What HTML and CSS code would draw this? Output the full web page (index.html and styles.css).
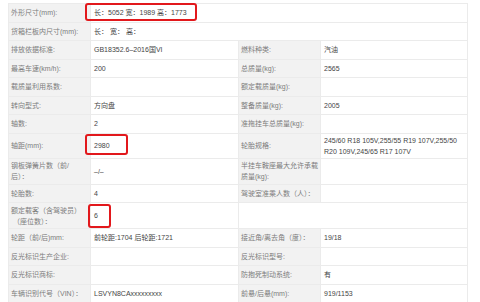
FILE: index.html
```html
<!DOCTYPE html>
<html lang="zh-CN">
<head>
<meta charset="utf-8">
<title>车辆参数</title>
<link rel="stylesheet" href="styles.css">
</head>
<body>
<table class="spec">
  <colgroup>
    <col class="c-label"><col class="c-value"><col class="c-label2"><col class="c-value2">
  </colgroup>
  <tbody>
    <tr>
      <td class="lb">外形尺寸(mm):</td>
      <td class="val" colspan="3"><span class="hl hl-size">长：5052 宽：1989 高：1773</span></td>
    </tr>
    <tr>
      <td class="lb">货箱栏板内尺寸(mm):</td>
      <td class="val" colspan="3">长： 宽： 高：</td>
    </tr>
    <tr>
      <td class="lb">排放依据标准:</td>
      <td class="val">GB18352.6–2016国VI</td>
      <td class="lb">燃料种类:</td>
      <td class="val">汽油</td>
    </tr>
    <tr>
      <td class="lb">最高车速(km/h):</td>
      <td class="val">200</td>
      <td class="lb">总质量(kg):</td>
      <td class="val">2565</td>
    </tr>
    <tr>
      <td class="lb">载质量利用系数:</td>
      <td class="val"></td>
      <td class="lb">额定载质量(kg):</td>
      <td class="val"></td>
    </tr>
    <tr>
      <td class="lb">转向型式:</td>
      <td class="val">方向盘</td>
      <td class="lb">整备质量(kg):</td>
      <td class="val">2005</td>
    </tr>
    <tr>
      <td class="lb">轴数:</td>
      <td class="val">2</td>
      <td class="lb">准拖挂车总质量(kg):</td>
      <td class="val"></td>
    </tr>
    <tr>
      <td class="lb">轴距(mm):</td>
      <td class="val"><span class="hl hl-base">2980</span></td>
      <td class="lb">轮胎规格:</td>
      <td class="val">245/60 R18 105V,255/55 R19 107V,255/50<br>R20 109V,245/65 R17 107V</td>
    </tr>
    <tr class="tall">
      <td class="lb">钢板弹簧片数（前/<br>后）：</td>
      <td class="val">–/–</td>
      <td class="lb">半挂车鞍座最大允许承载<br>质量(kg):</td>
      <td class="val"></td>
    </tr>
    <tr>
      <td class="lb">轮胎数:</td>
      <td class="val">4</td>
      <td class="lb">驾驶室准乘人数（人）：</td>
      <td class="val"></td>
    </tr>
    <tr class="tall">
      <td class="lb">额定载客（含驾驶员）<br>&nbsp;（座位数）：</td>
      <td class="val"><span class="hl hl-seat">6</span></td>
      <td class="val" colspan="2"></td>
    </tr>
    <tr>
      <td class="lb">轮距（前/后)mm:</td>
      <td class="val">前轮距:1704 后轮距:1721</td>
      <td class="lb">接近角/离去角（度）：</td>
      <td class="val">19/18</td>
    </tr>
    <tr>
      <td class="lb">反光标识生产企业:</td>
      <td class="val"></td>
      <td class="lb">反光标识型号:</td>
      <td class="val"></td>
    </tr>
    <tr>
      <td class="lb">反光标识商标:</td>
      <td class="val"></td>
      <td class="lb">防抱死制动系统:</td>
      <td class="val">有</td>
    </tr>
    <tr>
      <td class="lb">车辆识别代号（VIN）：</td>
      <td class="val">LSVYN8CAxxxxxxxxx</td>
      <td class="lb">前悬/后悬(mm):</td>
      <td class="val">919/1153</td>
    </tr>
  </tbody>
</table>
</body>
</html>
```

FILE: styles.css
```css
html, body {
  background: #ffffff;
}
body {
  margin: 3px 0 0 8px;
  font-family: "Liberation Sans", "Noto Sans CJK SC", sans-serif;
  font-size: 7px;
  line-height: 11px;
}
.spec {
  width: 459px;
  border-collapse: collapse;
  table-layout: fixed;
}
.c-label { width: 82px; }
.c-value { width: 148px; }
.c-label2 { width: 82px; }
.c-value2 { width: 147px; }
.spec tr {
  height: 18.5px;
}
.spec tr.tall {
  height: 26px;
}
.spec td {
  border: 1px solid #ebebeb;
  padding: 1px 3px;
  vertical-align: middle;
  word-break: break-all;
}
.spec td.lb {
  background: #f2f2f2;
  color: #7c7c7c;
  padding-left: 2px;
  padding-right: 0;
  white-space: nowrap;
}
.spec td.val {
  background: #ffffff;
  color: #454545;
}
.hl {
  position: relative;
  display: inline-block;
  line-height: 11px;
}
.hl::after {
  content: "";
  position: absolute;
  border: 2.5px solid #e2181c;
  border-radius: 3px;
}
.hl-size::after {
  left: -9px;
  width: 108px;
  top: -4px;
  height: 14px;
}
.hl-base::after {
  left: -9px;
  width: 39px;
  top: -6px;
  height: 17px;
}
.hl-seat::after {
  left: -6px;
  width: 19px;
  top: -6px;
  height: 20px;
}
```
